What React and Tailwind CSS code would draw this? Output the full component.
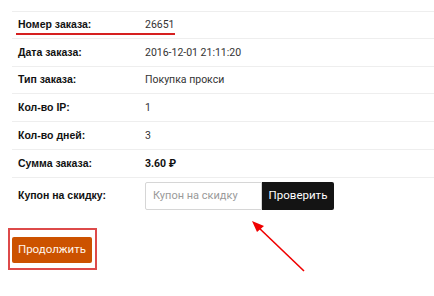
export default function App() {
  const rows = [
    { label: "Номер заказа:", value: "26651", h: "h-[27px]" },
    { label: "Дата заказа:", value: "2016-12-01 21:11:20", h: "h-[28px]" },
    { label: "Тип заказа:", value: "Покупка прокси", h: "h-[27px]" },
    { label: "Кол-во IP:", value: "1", h: "h-[28px]" },
    { label: "Кол-во дней:", value: "3", h: "h-[28px]" },
    { label: "Сумма заказа:", value: "3.60 ₽", h: "h-[28px]", bold: true },
  ];
  return (
    <div className="relative w-[434px] h-[296px] overflow-hidden bg-white font-['Liberation_Sans',sans-serif]">
      <div className="pt-[11px] pl-[12px]">
        {rows.map((r, i) => (
          <div
            key={i}
            className={`flex items-center border-t border-[#eeeeee] ${r.h}`}
          >
            <div className="w-[133px] pl-[6px] text-[10.5px] font-bold text-[#111]">{r.label}</div>
            <div
              className={`text-[10.5px] font-['Roboto'] ${
                r.bold ? "font-bold text-[#111]" : "text-[#333]"
              }`}
            >
              {r.value}
            </div>
          </div>
        ))}
        <div className="flex items-center border-t border-[#eeeeee] pt-[4px] pb-[4px]">
          <div className="w-[133px] pl-[6px] text-[10.5px] font-bold text-[#111]">Купон на скидку:</div>
          <div className="flex h-[28px]">
            <div className="w-[117px] border border-[#d6d6d6] rounded-l-[2px] flex items-center pl-[7px] text-[11px] text-[#9a9a9a] font-['Roboto']">
              Купон на скидку
            </div>
            <div className="w-[72px] bg-[#141414] rounded-r-[2px] flex items-center justify-center text-[11.5px] text-white font-['Roboto']">
              Проверить
            </div>
          </div>
        </div>
      </div>
      <div className="mt-[14px] ml-[8px] w-[89px] h-[42px] border-2 border-[#dd4a4a] pt-[7px] pl-[2px]">
        <div className="w-[80px] h-[26px] bg-[#cc5200] rounded-[2px] flex items-center justify-center text-[11.5px] text-[#fff4ea] font-['Roboto']">
          Продолжить
        </div>
      </div>
      <div className="absolute left-[16px] top-[33px] w-[159px] h-[2px] bg-[#d62020]" />
      <svg className="absolute left-0 top-0" width="434" height="296">
        <line x1="304" y1="271" x2="258" y2="227" stroke="#f00000" strokeWidth="1.6" />
        <polygon points="252,221 264,226 257,232" fill="#f00000" />
      </svg>
    </div>
  );
}
